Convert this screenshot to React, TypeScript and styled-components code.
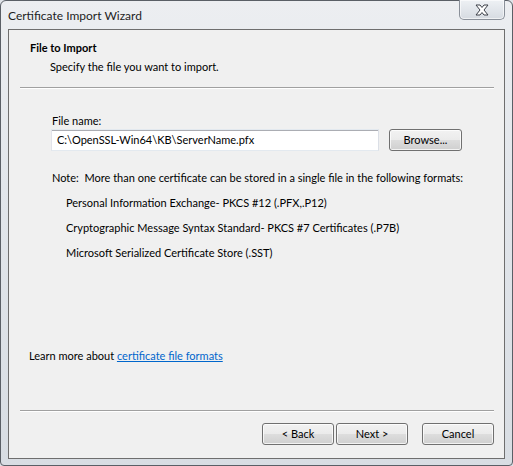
import React from "react";
import styled, { createGlobalStyle } from "styled-components";

const GlobalStyle = createGlobalStyle`
  html, body { margin: 0; padding: 0; }
  body { width: 513px; height: 466px; overflow: hidden; background: #dfe3e8; }
  * { box-sizing: border-box; }
`;

const FONT = `Lato, "Noto Sans", sans-serif`;

const Window = styled.div`
  width: 513px;
  height: 466px;
  display: flex;
  flex-direction: column;
  padding: 0 7px 6px 7px;
  border: 1px solid #5a5f66;
  border-radius: 6px 6px 4px 4px;
  background: linear-gradient(180deg, #eceef1 0%, #e2e6eb 40%, #d8dde3 100%);
  font-family: ${FONT};
  font-size: 11px;
  color: #000;
`;

const TitleBar = styled.div`
  height: 28px;
  display: flex;
  align-items: flex-start;
  justify-content: space-between;
`;

const Title = styled.div`
  padding-top: 7px;
  font-size: 12px;
  color: #1e1e1e;
`;

const CloseButton = styled.div`
  width: 46px;
  height: 20px;
  margin-top: -1px;
  border: 1px solid #8a9099;
  border-top: none;
  border-radius: 0 0 5px 5px;
  background: linear-gradient(180deg, #eef1f4 0%, #e2e6eb 50%, #d6dbe1 100%);
  box-shadow: inset 0 0 0 1px rgba(255, 255, 255, 0.6);
  display: flex;
  align-items: center;
  justify-content: center;
`;

const Client = styled.div`
  flex: 1;
  display: flex;
  flex-direction: column;
  background: #f0f0f0;
  border: 1px solid #6e6e6e;
`;

const Header = styled.div`
  padding: 10px 0 0 21px;
  height: 57px;
`;

const HeaderTitle = styled.div`
  font-weight: bold;
  line-height: 16px;
`;

const HeaderSub = styled.div`
  padding-left: 20px;
  margin-top: 3px;
  line-height: 16px;
`;

const Separator = styled.div`
  margin: 0 10px 0 11px;
  height: 2px;
  border-top: 1px solid #a0a0a0;
  border-bottom: 1px solid #ffffff;
`;

const Body = styled.div`
  flex: 1;
  display: flex;
  flex-direction: column;
  padding: 24px 0 0 43px;
`;

const Label = styled.div`
  line-height: 16px;
`;

const FileRow = styled.div`
  display: flex;
  align-items: center;
  gap: 10px;
  margin-left: -1px;
`;

const TextBox = styled.div`
  width: 328px;
  height: 22px;
  border: 1px solid #abadb3;
  border-top-color: #e3e9ef;
  border-left-color: #e2e3ea;
  border-right-color: #dbdfe6;
  border-bottom-color: #e3e9ef;
  background: #fff;
  padding: 0 0 0 5px;
  display: flex;
  align-items: center;
  line-height: 16px;
  box-shadow: inset 0 1px 0 #abadb3;
`;

const Button = styled.div<{ $width?: number }>`
  width: ${(p) => p.$width ?? 72}px;
  height: 22px;
  border: 1px solid #707070;
  border-radius: 3px;
  background: linear-gradient(180deg, #f2f2f2 0%, #ebebeb 48%, #dddddd 52%, #cfcfcf 100%);
  box-shadow: inset 0 0 0 1px rgba(255, 255, 255, 0.75);
  display: flex;
  align-items: center;
  justify-content: center;
  line-height: 16px;
  color: #000;
`;

const Note = styled.div`
  margin-top: 19px;
  line-height: 16px;
`;

const FormatList = styled.div`
  display: flex;
  flex-direction: column;
  gap: 9px;
  margin-top: 9px;
  padding-left: 14px;
`;

const FormatItem = styled.div`
  line-height: 16px;
`;

const Spacer = styled.div`
  flex: 1;
`;

const LearnMore = styled.div`
  padding: 0 0 46px 20px;
  line-height: 16px;
`;

const Link = styled.a`
  color: #0066cc;
  text-decoration: underline;
  cursor: pointer;
`;

const Footer = styled.div`
  height: 46px;
  display: flex;
  align-items: flex-start;
  justify-content: flex-end;
  padding: 11px 10px 0 0;
  gap: 2px;
`;

const CancelWrap = styled.div`
  margin-left: 12px;
`;

const CloseIcon = () => (
  <svg width="16" height="12" viewBox="0 0 16 12">
    <path
      d="M2 1 L6 1 L8 3.5 L10 1 L14 1 L10 6 L14 11 L10 11 L8 8.5 L6 11 L2 11 L6 6 Z"
      fill="#ffffff"
      stroke="#3c4048"
      strokeWidth="1"
      strokeLinejoin="round"
    />
  </svg>
);

export default function App() {
  return (
    <>
      <GlobalStyle />
      <Window>
        <TitleBar>
          <Title>Certificate Import Wizard</Title>
          <CloseButton>
            <CloseIcon />
          </CloseButton>
        </TitleBar>
        <Client>
          <Header>
            <HeaderTitle>File to Import</HeaderTitle>
            <HeaderSub>Specify the file you want to import.</HeaderSub>
          </Header>
          <Separator />
          <Body>
            <Label>File name:</Label>
            <FileRow>
              <TextBox>C:\OpenSSL-Win64\KB\ServerName.pfx</TextBox>
              <Button $width={73}>Browse...</Button>
            </FileRow>
            <Note>Note:&nbsp; More than one certificate can be stored in a single file in the following formats:</Note>
            <FormatList>
              <FormatItem>Personal Information Exchange- PKCS #12 (.PFX,.P12)</FormatItem>
              <FormatItem>Cryptographic Message Syntax Standard- PKCS #7 Certificates (.P7B)</FormatItem>
              <FormatItem>Microsoft Serialized Certificate Store (.SST)</FormatItem>
            </FormatList>
          </Body>
          <Spacer />
          <LearnMore>
            Learn more about <Link>certificate file formats</Link>
          </LearnMore>
          <Separator />
          <Footer>
            <Button>&lt; Back</Button>
            <Button>Next &gt;</Button>
            <CancelWrap>
              <Button>Cancel</Button>
            </CancelWrap>
          </Footer>
        </Client>
      </Window>
    </>
  );
}
